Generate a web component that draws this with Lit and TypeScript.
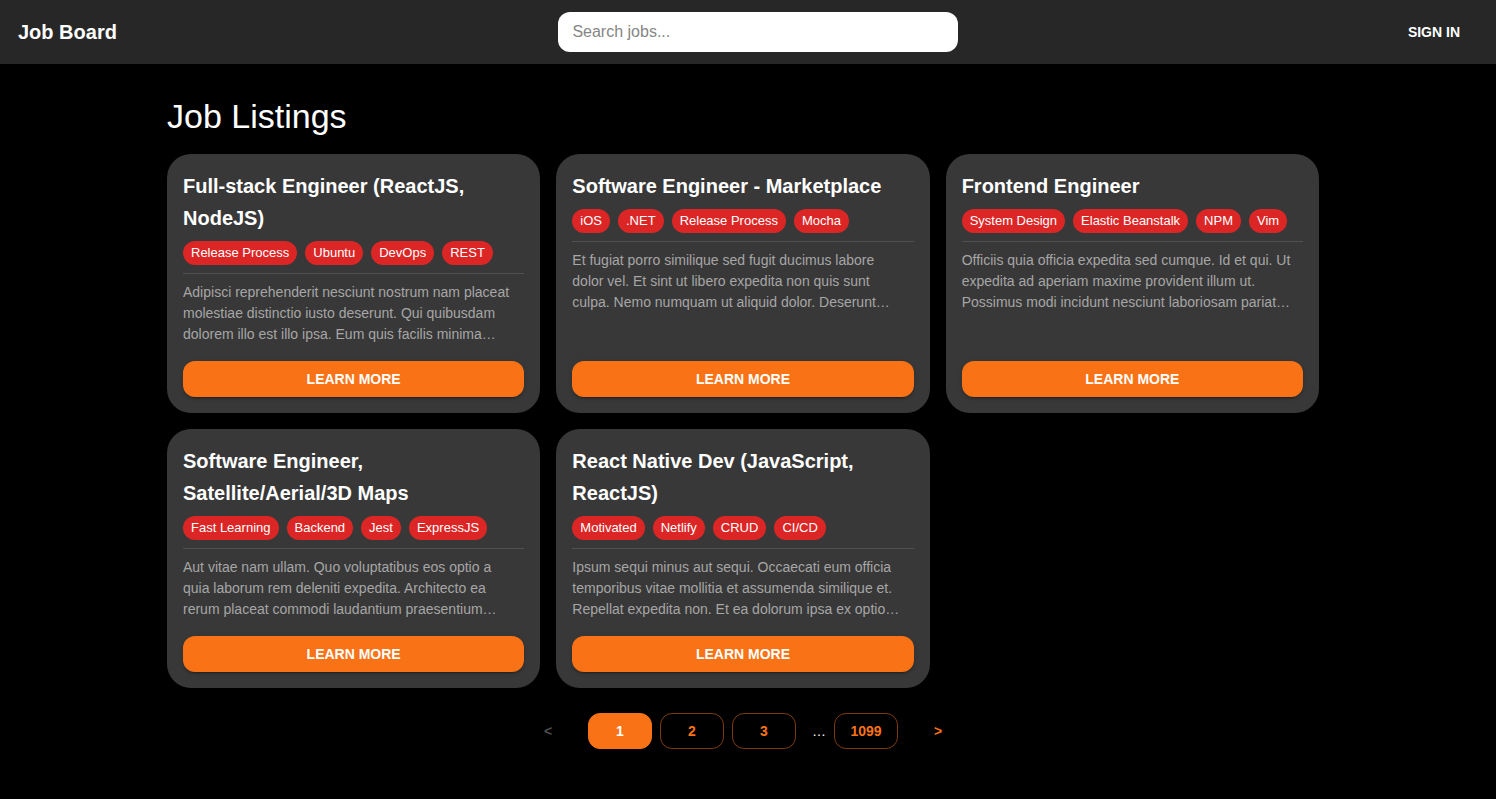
import { LitElement, html, css } from "lit";
import { customElement, property, state } from "lit/decorators.js";
import { classMap } from "lit/directives/class-map.js";

interface Job {
  title: string;
  skills: string[];
  summary: string;
}

const JOBS: Job[] = [
  {
    title: "Full-stack Engineer (ReactJS, NodeJS)",
    skills: ["Release Process", "Ubuntu", "DevOps", "REST"],
    summary:
      "Adipisci reprehenderit nesciunt nostrum nam placeat molestiae distinctio iusto deserunt. Qui quibusdam dolorem illo est illo ipsa. Eum quis facilis minima…",
  },
  {
    title: "Software Engineer - Marketplace",
    skills: ["iOS", ".NET", "Release Process", "Mocha"],
    summary:
      "Et fugiat porro similique sed fugit ducimus labore dolor vel. Et sint ut libero expedita non quis sunt culpa. Nemo numquam ut aliquid dolor. Deserunt…",
  },
  {
    title: "Frontend Engineer",
    skills: ["System Design", "Elastic Beanstalk", "NPM", "Vim"],
    summary:
      "Officiis quia officia expedita sed cumque. Id et qui. Ut expedita ad aperiam maxime provident illum ut. Possimus modi incidunt nesciunt laboriosam pariat…",
  },
  {
    title: "Software Engineer, Satellite/Aerial/3D Maps",
    skills: ["Fast Learning", "Backend", "Jest", "ExpressJS"],
    summary:
      "Aut vitae nam ullam. Quo voluptatibus eos optio a quia laborum rem deleniti expedita. Architecto ea rerum placeat commodi laudantium praesentium…",
  },
  {
    title: "React Native Dev (JavaScript, ReactJS)",
    skills: ["Motivated", "Netlify", "CRUD", "CI/CD"],
    summary:
      "Ipsum sequi minus aut sequi. Occaecati eum officia temporibus vitae mollitia et assumenda similique et. Repellat expedita non. Et ea dolorum ipsa ex optio…",
  },
];

@customElement("job-card")
export class JobCard extends LitElement {
  @property({ attribute: false }) job!: Job;

  static styles = css`
    :host {
      display: flex;
      flex-direction: column;
      box-sizing: border-box;
      min-width: 0;
      padding: 16px;
      border-radius: 24px;
      background: #383838;
      color: #fff;
    }
    .title {
      margin: 0 0 7px;
      font-size: 20px;
      line-height: 32px;
      font-weight: 700;
    }
    .skills {
      display: flex;
      flex-wrap: wrap;
      gap: 8px;
      margin: 0;
      padding: 0 0 8px;
      list-style: none;
      border-bottom: 1px solid #505050;
    }
    .skill {
      padding: 0 8px;
      border-radius: 12px;
      background: #dc2626;
      font-size: 13px;
      line-height: 24px;
    }
    .summary {
      margin: 8px 0 16px;
      padding-right: 8px;
      color: #a6a6a6;
      font-size: 14px;
      line-height: 21px;
    }
    .more {
      margin-top: auto;
      height: 36px;
      border: 0;
      border-radius: 12px;
      background: #f97316;
      box-shadow:
        0 3px 1px -2px rgba(0, 0, 0, 0.2),
        0 2px 2px rgba(0, 0, 0, 0.14),
        0 1px 5px rgba(0, 0, 0, 0.12);
      color: #fff;
      font: 700 14px/24px "Liberation Sans", Arial, sans-serif;
      text-transform: uppercase;
      cursor: pointer;
    }
    .more:hover {
      background: #ea580c;
    }
  `;

  render() {
    return html`
      <h2 class="title">${this.job.title}</h2>
      <ul class="skills">
        ${this.job.skills.map((s) => html`<li class="skill">${s}</li>`)}
      </ul>
      <p class="summary">${this.job.summary}</p>
      <button class="more" type="button">Learn more</button>
    `;
  }
}

@customElement("app-root")
export class AppRoot extends LitElement {
  @state() private page = 1;

  static styles = css`
    :host {
      display: block;
      min-height: 100vh;
      background: #000;
      color: #fff;
      font-family: "Liberation Sans", Arial, sans-serif;
    }
    .bar {
      display: flex;
      align-items: center;
      justify-content: space-between;
      gap: 16px;
      height: 64px;
      padding: 0 28px 0 18px;
      background: #272727;
    }
    .brand {
      color: #fff;
      font-size: 20px;
      line-height: 32px;
      font-weight: 700;
      text-decoration: none;
      white-space: nowrap;
    }
    .search {
      flex: 0 1 400px;
      min-width: 0;
      display: flex;
    }
    .field {
      box-sizing: border-box;
      width: 100%;
      height: 40px;
      padding: 0 14px;
      border: 0;
      border-radius: 12px;
      background: #fff;
      color: #111;
      font: 16px "Liberation Sans", Arial, sans-serif;
    }
    .field::placeholder {
      color: #858585;
      opacity: 1;
    }
    button {
      height: 36px;
      padding: 0 8px;
      border: 0;
      border-radius: 12px;
      background: none;
      color: #fff;
      font: 700 14px/24px "Liberation Sans", Arial, sans-serif;
      cursor: pointer;
    }
    .signin {
      text-transform: uppercase;
      white-space: nowrap;
    }
    .content {
      padding: 32px 10px 48px 0;
    }
    .container {
      box-sizing: border-box;
      max-width: 1200px;
      margin: 0 auto;
      padding: 0 24px;
    }
    .heading {
      margin: 0 0 18px;
      font-size: 34px;
      line-height: 40px;
      font-weight: 400;
    }
    .grid {
      display: grid;
      grid-template-columns: repeat(3, minmax(0, 1fr));
      gap: 16px;
    }
    .pager {
      display: flex;
      justify-content: center;
      align-items: center;
      gap: 8px;
      margin-top: 25px;
    }
    .pager button {
      box-sizing: border-box;
      min-width: 64px;
      color: #f97316;
    }
    .pager .number {
      border: 1px solid rgba(249, 115, 22, 0.5);
    }
    .pager .current {
      border-color: #f97316;
      background: #f97316;
      color: #fff;
    }
    .pager button:disabled {
      color: #4d4d4d;
      cursor: default;
    }
    .dots {
      padding-left: 8px;
      font-size: 14px;
      line-height: 20px;
    }
    @media (max-width: 900px) {
      .grid {
        grid-template-columns: repeat(2, minmax(0, 1fr));
      }
    }
    @media (max-width: 600px) {
      .grid {
        grid-template-columns: minmax(0, 1fr);
      }
    }
  `;

  private number(n: number) {
    const current = n === this.page;
    return html`<button
      type="button"
      class=${classMap({ number: true, current })}
      aria-current=${current ? "page" : "false"}
      @click=${() => (this.page = n)}
    >${n}</button>`;
  }

  render() {
    return html`
      <header class="bar">
        <a class="brand" href="#">Job Board</a>
        <label class="search">
          <input class="field" type="search" placeholder="Search jobs..." aria-label="Search jobs" />
        </label>
        <button class="signin" type="button">Sign in</button>
      </header>
      <main class="content">
        <div class="container">
          <h1 class="heading">Job Listings</h1>
          <div class="grid">
            ${JOBS.map((job) => html`<job-card .job=${job}></job-card>`)}
          </div>
          <nav class="pager" aria-label="Pages">
            <button
              type="button"
              aria-label="Previous page"
              ?disabled=${this.page === 1}
              @click=${() => (this.page -= 1)}
            >&lt;</button>
            ${[1, 2, 3].map((n) => this.number(n))}
            <span class="dots">…</span>
            ${this.number(1099)}
            <button
              type="button"
              aria-label="Next page"
              ?disabled=${this.page === 1099}
              @click=${() => (this.page += 1)}
            >&gt;</button>
          </nav>
        </div>
      </main>
    `;
  }
}
